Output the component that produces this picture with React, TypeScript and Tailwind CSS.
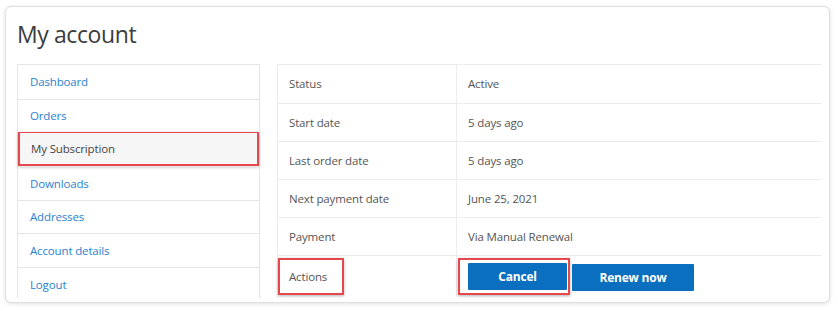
import React from "react";

const navItems = [
  "Dashboard",
  "Orders",
  "My Subscription",
  "Downloads",
  "Addresses",
  "Account details",
  "Logout",
];

const rows: [string, string][] = [
  ["Status", "Active"],
  ["Start date", "5 days ago"],
  ["Last order date", "5 days ago"],
  ["Next payment date", "June 25, 2021"],
  ["Payment", "Via Manual Renewal"],
];

export default function App() {
  return (
    <div
      className="w-[838px] h-[311px] bg-white pt-[6px] pl-[5px]"
      style={{ fontFamily: '"Open Sans", "Noto Sans", sans-serif' }}
    >
      <div className="w-[825px] h-[297px] rounded-[6px] border border-[#dedede] bg-white shadow-[0_1px_4px_rgba(0,0,0,0.12)] overflow-hidden">
        <div className="h-[291px] overflow-hidden pl-[11px] pr-[7px]">
          <h1 className="h-[57px] pt-[12px] text-[23px] leading-[30px] text-[#3c3c3c] font-normal tracking-[-0.4px]">
            My account
          </h1>
          <div className="flex gap-[17px]">
            <nav className="w-[243px] border border-[#e5e5e5] shrink-0">
              {navItems.map((item, i) => {
                const active = item === "My Subscription";
                return (
                  <div
                    key={item}
                    className={
                      "h-[33.67px] flex items-center text-[11.5px] tracking-[-0.15px] " +
                      (i > 0 ? "border-t border-[#e5e5e5] " : "") +
                      (active
                        ? "bg-[#f6f6f6] text-[#444] border-2 border-[#e4474c] shadow-[0_1px_3px_rgba(0,0,0,0.3)] pl-[11px]"
                        : "text-[#2b82cf] pl-[12px]")
                    }
                  >
                    {item}
                  </div>
                );
              })}
            </nav>
            <div className="flex-1 border-l border-t border-[#ececec]">
              {rows.map(([k, v], i) => (
                <div
                  key={k}
                  className={
                    "h-[38px] flex text-[11.5px] tracking-[-0.15px] text-[#555] " +
                    (i > 0 ? "border-t border-[#ececec]" : "")
                  }
                >
                  <div className="w-[179px] border-r border-[#ececec] flex items-center pl-[11px]">
                    {k}
                  </div>
                  <div className="flex-1 flex items-center pl-[11px]">{v}</div>
                </div>
              ))}
              <div className="h-[42px] flex text-[11.5px] tracking-[-0.15px] text-[#555] border-t border-[#ececec]">
                <div className="w-[179px] border-r border-[#ececec] flex items-start pt-[2px]">
                  <div className="h-[37px] w-[66px] border-2 border-[#e4474c] shadow-[0_1px_3px_rgba(0,0,0,0.3)] flex items-center pl-[9px]">
                    Actions
                  </div>
                </div>
                <div className="flex-1 flex items-start pt-[2px] pl-[1px]">
                  <div className="h-[37px] w-[112px] border-2 border-[#e4474c] shadow-[0_1px_3px_rgba(0,0,0,0.3)] flex items-center pl-[8px]">
                    <button className="h-[27px] w-[99px] bg-[#0a6fbe] text-white font-bold text-[12px] tracking-[-0.2px] rounded-[1px]">
                      Cancel
                    </button>
                  </div>
                  <button className="mt-[6px] ml-[2px] h-[27px] w-[122px] bg-[#0a6fbe] text-white font-bold text-[12px] tracking-[-0.2px] rounded-[1px]">
                    Renew now
                  </button>
                </div>
              </div>
            </div>
          </div>
        </div>
      </div>
    </div>
  );
}
